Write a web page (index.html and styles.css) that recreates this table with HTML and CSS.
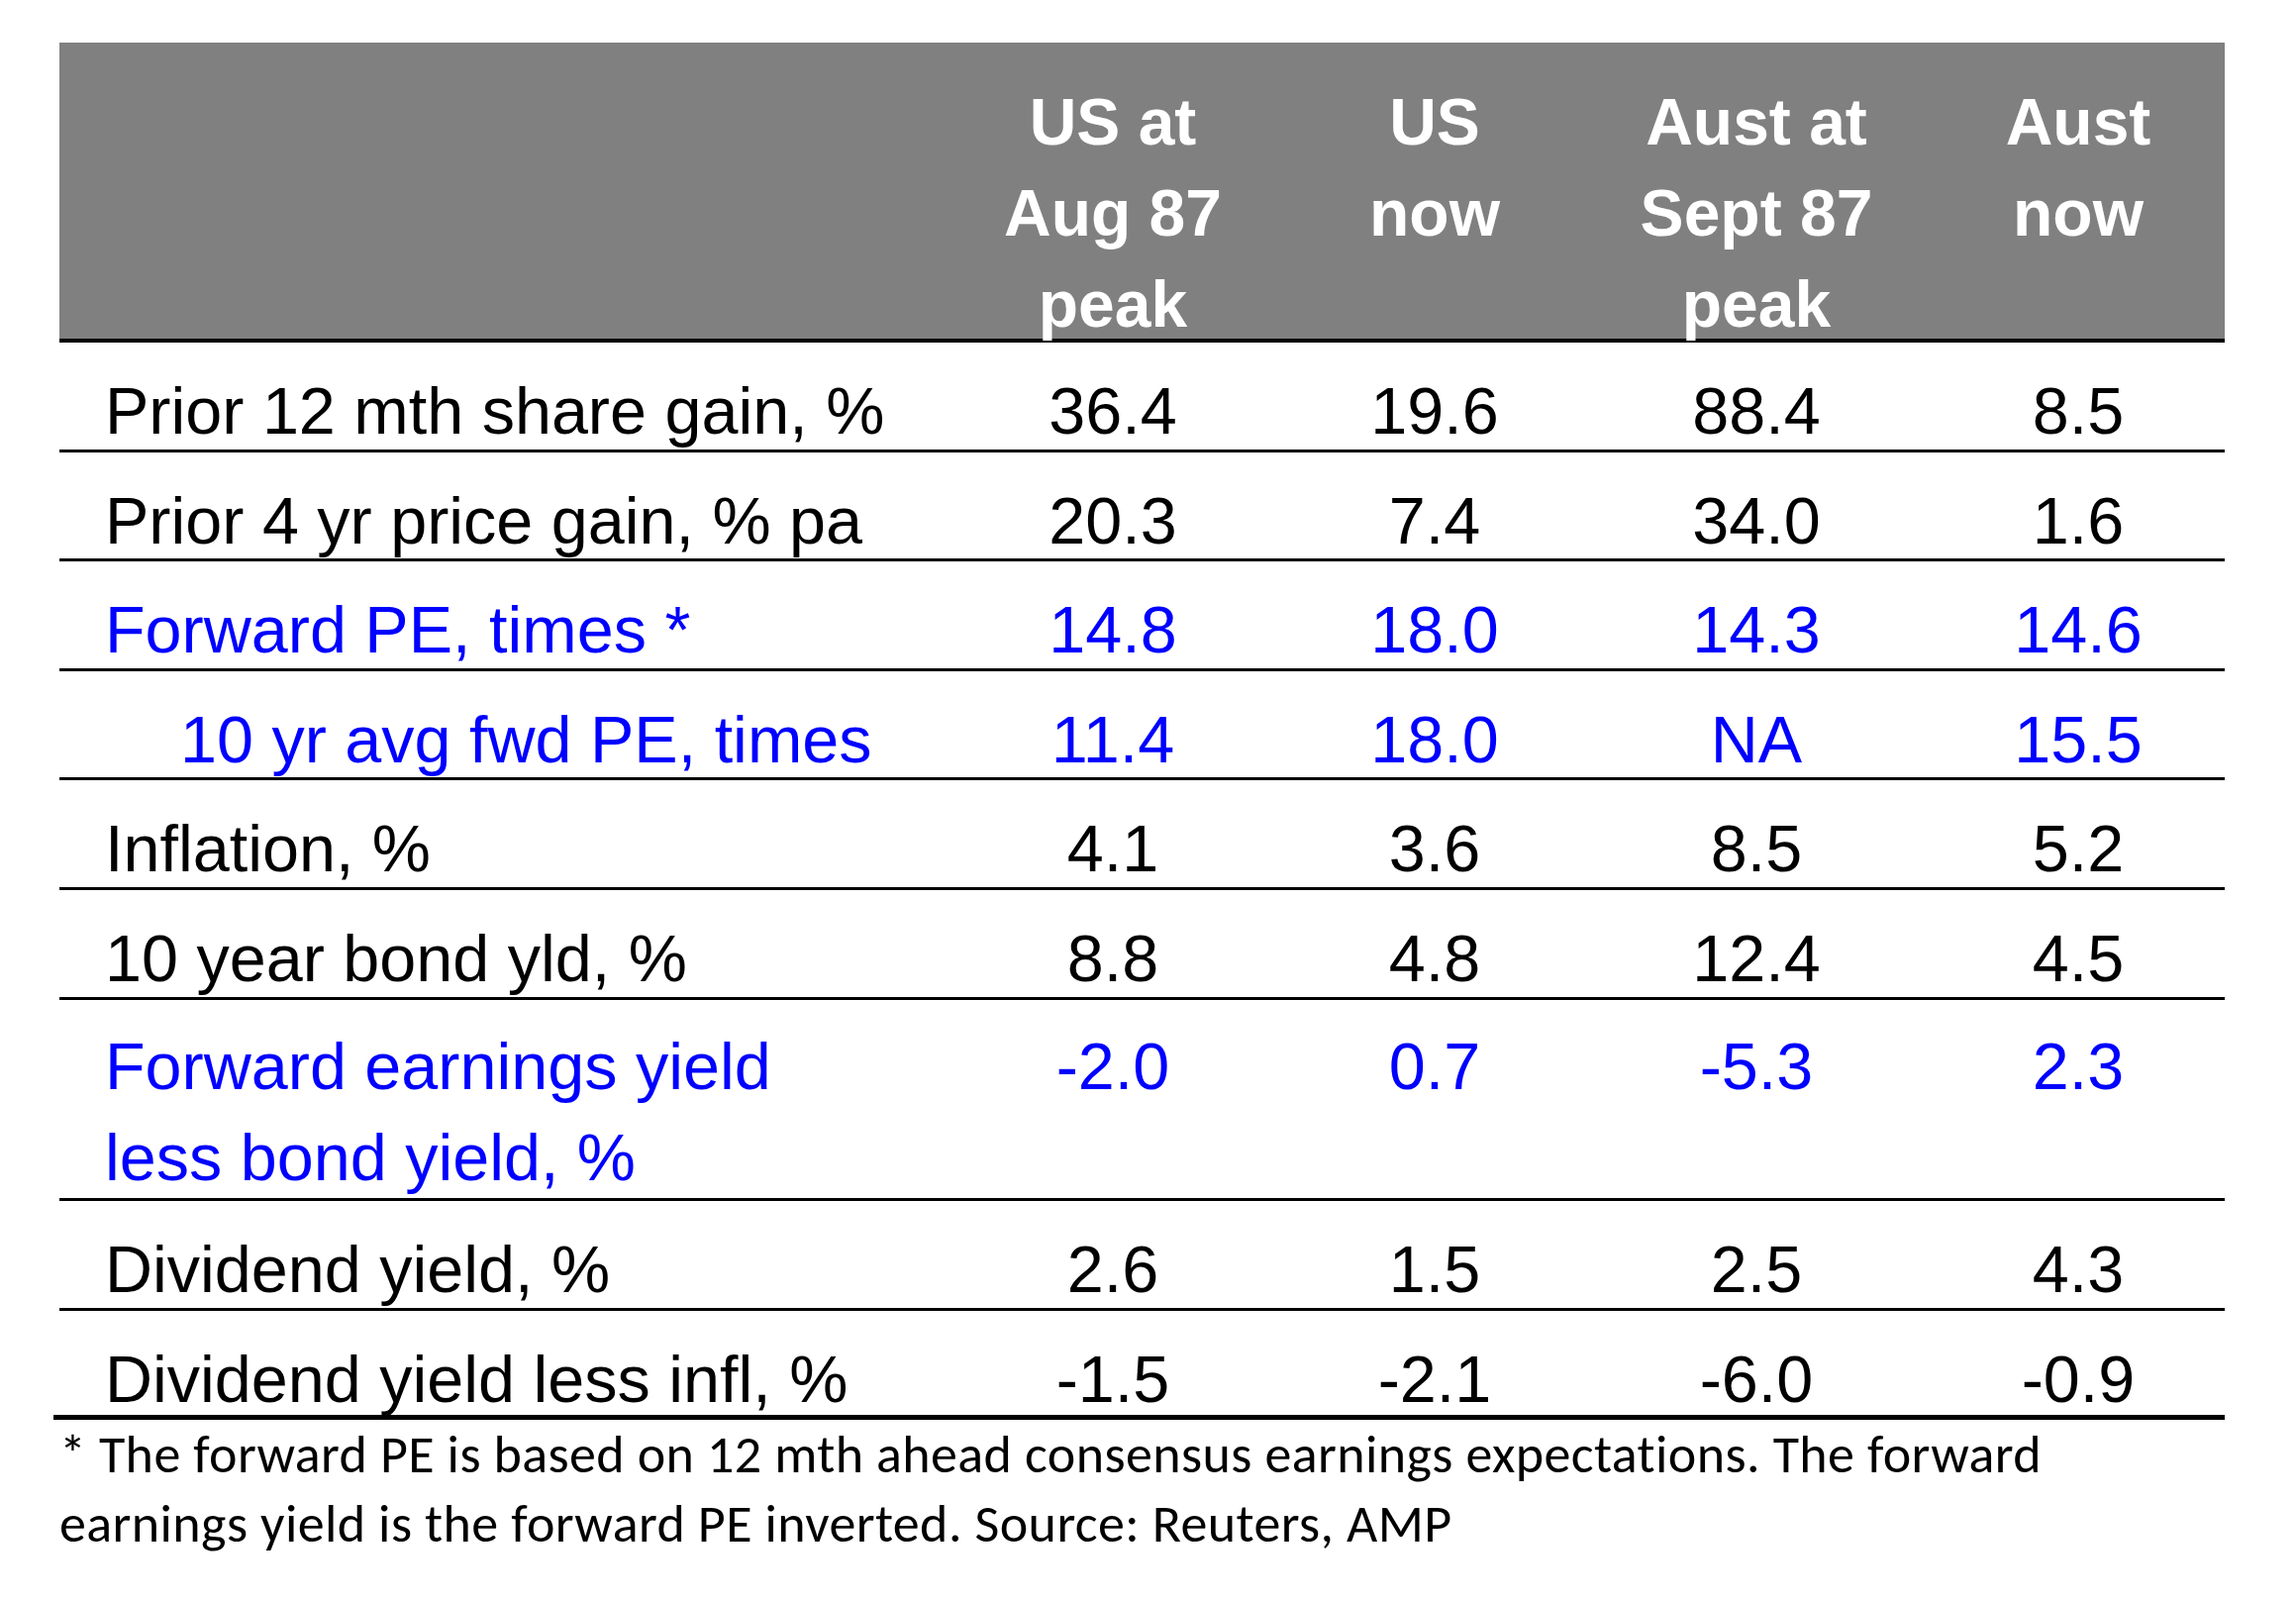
FILE: index.html
```html
<!DOCTYPE html>
<html lang="en">
<head>
<meta charset="utf-8">
<title>1987 peak vs now</title>
<link rel="stylesheet" href="styles.css">
</head>
<body>
<div class="page">
  <div class="table">
    <div class="head">
      <div class="hcell"></div>
      <div class="hcell">US at<br>Aug 87<br>peak</div>
      <div class="hcell">US<br>now</div>
      <div class="hcell">Aust at<br>Sept 87<br>peak</div>
      <div class="hcell">Aust<br>now</div>
    </div>
    <div class="row">
      <div class="label">Prior 12 mth share gain, %</div>
      <div class="val">36.4</div><div class="val">19.6</div><div class="val">88.4</div><div class="val">8.5</div>
    </div>
    <div class="row">
      <div class="label">Prior 4 yr price gain, % pa</div>
      <div class="val">20.3</div><div class="val">7.4</div><div class="val">34.0</div><div class="val">1.6</div>
    </div>
    <div class="row blue">
      <div class="label">Forward PE, times *</div>
      <div class="val">14.8</div><div class="val">18.0</div><div class="val">14.3</div><div class="val">14.6</div>
    </div>
    <div class="row blue">
      <div class="label indent">10 yr avg fwd PE, times</div>
      <div class="val">11.4</div><div class="val">18.0</div><div class="val">NA</div><div class="val">15.5</div>
    </div>
    <div class="row">
      <div class="label">Inflation, %</div>
      <div class="val">4.1</div><div class="val">3.6</div><div class="val">8.5</div><div class="val">5.2</div>
    </div>
    <div class="row">
      <div class="label">10 year bond yld, %</div>
      <div class="val">8.8</div><div class="val">4.8</div><div class="val">12.4</div><div class="val">4.5</div>
    </div>
    <div class="row blue tall">
      <div class="label">Forward earnings yield<br>less bond yield, %</div>
      <div class="val">-2.0</div><div class="val">0.7</div><div class="val">-5.3</div><div class="val">2.3</div>
    </div>
    <div class="row">
      <div class="label">Dividend yield, %</div>
      <div class="val">2.6</div><div class="val">1.5</div><div class="val">2.5</div><div class="val">4.3</div>
    </div>
    <div class="row last">
      <div class="label">Dividend yield less infl, %</div>
      <div class="val">-1.5</div><div class="val">-2.1</div><div class="val">-6.0</div><div class="val">-0.9</div>
    </div>
  </div>
  <p class="note">* The forward PE is based on 12 mth ahead consensus earnings expectations. The forward<br>earnings yield is the forward PE inverted. Source: Reuters, AMP</p>
</div>
</body>
</html>
```

FILE: styles.css
```css
html, body {
  margin: 0;
  padding: 0;
  background: #ffffff;
}

.page {
  width: 2319px;
  height: 1617px;
  overflow: hidden;
  padding-top: 43px;
  box-sizing: border-box;
}

.table {
  width: 2187px;
  margin-left: 60px;
  font-family: "Liberation Sans", Arial, sans-serif;
  font-size: 66.5px;
  line-height: 92px;
  color: #000000;
}

.head,
.row {
  display: grid;
  grid-template-columns: 901.5px repeat(4, 325px);
  box-sizing: border-box;
}

.head {
  height: 303px;
  padding-top: 34px;
  background: #808080;
  border-bottom: 4px solid #000000;
  color: #ffffff;
  font-weight: bold;
  font-size: 66px;
}

.hcell {
  text-align: center;
  white-space: nowrap;
}

.row {
  height: 110.6px;
  padding-top: 23px;
  border-bottom: 3px solid #000000;
}

.row.tall {
  height: 203.4px;
  padding-top: 21px;
}

.row.last {
  height: 110.4px;
  border-bottom-width: 5px;
  margin-left: -6px;
  padding-left: 6px;
}

.row.blue {
  color: #0000ff;
}

.label {
  padding-left: 46px;
  white-space: nowrap;
}

.label.indent {
  padding-left: 122px;
}

.val {
  text-align: center;
  white-space: nowrap;
}

.note {
  margin: 0;
  padding-left: 60px;
  font-family: Carlito, Lato, "Open Sans", sans-serif;
  font-size: 54px;
  letter-spacing: 0.4px;
  font-variant-ligatures: none;
  line-height: 70px;
  color: #000000;
  white-space: nowrap;
}
```
